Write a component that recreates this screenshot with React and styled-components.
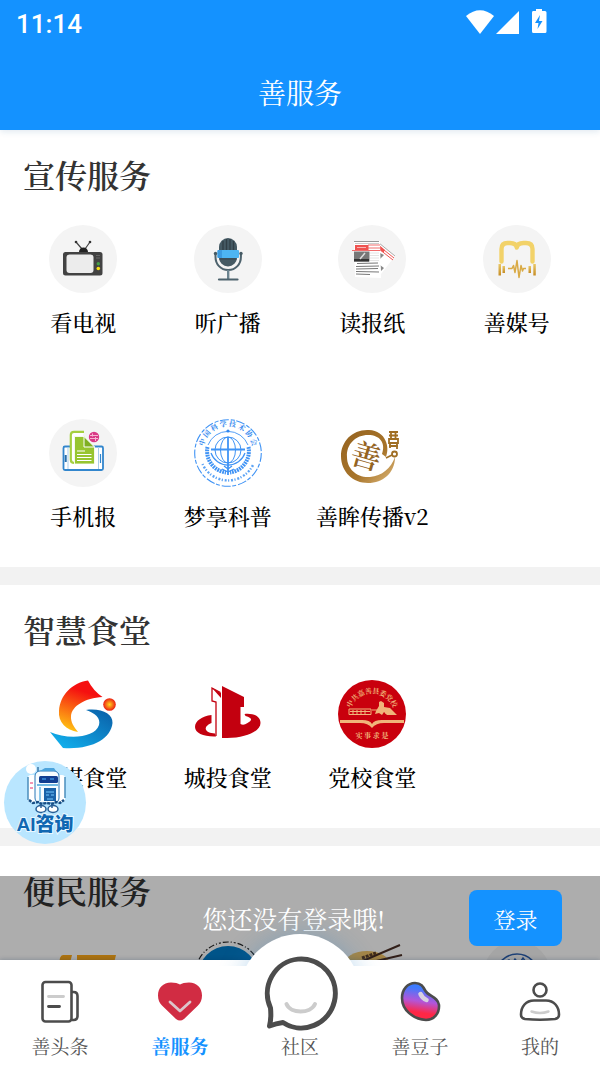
import React from "react";
import styled, { createGlobalStyle, css } from "styled-components";

const GlobalStyle = createGlobalStyle`
  * {
    box-sizing: border-box;
  }
  body {
    margin: 0;
    background: #fff;
    font-family: "Noto Serif CJK SC", "Liberation Serif", "Noto Sans CJK SC", serif;
  }
  button {
    font-family: inherit;
  }
`;

const Screen = styled.div`
  position: relative;
  display: flex;
  flex-direction: column;
  height: 100vh;
  overflow: hidden;
  background: #fff;
`;

const Header = styled.header`
  flex: none;
  background: #1492ff;
  color: #fff;
  box-shadow: 0 2px 6px rgba(20, 80, 140, 0.12);
`;

const StatusBar = styled.div`
  display: flex;
  align-items: center;
  justify-content: space-between;
  height: 48px;
  padding: 0 52px 0 16px;
  font: 500 26px Roboto, sans-serif;
`;

const StatusIcons = styled.div`
  display: flex;
  align-items: center;
  height: 44px;
  align-self: flex-start;
`;

const PageTitle = styled.h1`
  margin: 0;
  padding: 24px 0 18px;
  font-size: 28px;
  line-height: 40px;
  font-weight: 400;
  text-align: center;
`;

const Content = styled.main`
  flex: 1;
  min-height: 0;
  overflow-y: auto;
  scrollbar-width: none;
`;

const Section = styled.section`
  border-bottom: 18px solid #f2f2f2;
`;

const SectionTitle = styled.h2`
  margin: 0;
  padding: 20px 23px 24px;
  font-size: 32px;
  line-height: 48px;
  font-weight: 600;
  color: #333;
`;

const ServiceGrid = styled.div`
  display: grid;
  grid-template-columns: repeat(4, 1fr);
  row-gap: 46px;
  padding: 3px 11px 0;
`;

const ServiceButton = styled.button`
  display: flex;
  flex-direction: column;
  align-items: center;
  gap: 13px;
  height: 148px;
  padding: 0;
  border: 0;
  background: none;
  color: #000;
  font-size: 22px;
  line-height: 32px;
  font-weight: 500;
  white-space: nowrap;
`;

const ServiceIcon = styled.span`
  display: block;
  width: 68px;
  height: 68px;
  border-radius: 50%;
  background: ${({ $plate }) => ($plate ? "#f4f4f4" : "transparent")};

  svg {
    display: block;
    overflow: visible;
  }
`;

const Assistant = styled.button`
  position: absolute;
  left: 4px;
  bottom: 222px;
  width: 82px;
  height: 83px;
  padding: 0;
  border: 0;
  border-radius: 50%;
  background: #b9e6ff;

  svg {
    display: block;
  }
`;

const LoginBar = styled.div`
  position: absolute;
  left: 0;
  right: 0;
  bottom: 106px;
  display: flex;
  align-items: center;
  justify-content: flex-end;
  gap: 84px;
  height: 84px;
  padding-right: 38px;
  background: rgba(0, 0, 0, 0.32);
  color: #fff;
  font-size: 25px;
`;

const LoginButton = styled.button`
  width: 93px;
  height: 56px;
  border: 0;
  border-radius: 8px;
  background: #1492ff;
  color: #fff;
  font-size: 22px;
`;

const TabBar = styled.nav`
  position: absolute;
  left: 0;
  right: 0;
  bottom: 0;
  display: grid;
  grid-template-columns: repeat(5, 1fr);
  height: 106px;
  background: #fff;
  box-shadow: 0 -1px 4px rgba(0, 40, 80, 0.2);
`;

const Tab = styled.button`
  position: relative;
  z-index: 1;
  display: flex;
  flex-direction: column;
  align-items: center;
  gap: 8px;
  padding: 17px 0 0;
  border: 0;
  background: none;
  color: #555;
  font-size: 19px;
  line-height: 26px;
  font-weight: 400;

  ${({ $active }) =>
    $active &&
    css`
      color: #1492ff;
      font-weight: 700;
    `}
`;

const TabIcon = styled.span`
  display: flex;
  align-items: center;
  justify-content: center;
  width: 48px;
  height: 48px;

  ${({ $raised }) =>
    $raised &&
    css`
      height: 66px;
      margin-top: -18px;
    `}

  svg {
    flex: none;
    overflow: visible;
  }
`;

// round bump behind the middle tab
const Bump = styled.span`
  position: absolute;
  left: 50%;
  top: -26px;
  width: 122px;
  height: 122px;
  margin-left: -61px;
  border-radius: 50%;
  background: #fff;
  box-shadow: 0 0 24px rgba(40, 130, 200, 0.3);
`;

const BumpCover = styled.span`
  position: absolute;
  left: 0;
  right: 0;
  top: 6px;
  bottom: 0;
  background: #fff;
`;

const Art = ({ size = 68, children, ...rest }) => (
  <svg width={size} height={size} viewBox={`0 0 ${size} ${size}`} fill="none" aria-hidden="true" {...rest}>
    {children}
  </svg>
);

const TvIcon = () => (
  <Art>
    <path d="M33 24 27 17M36 24 41 17" stroke="#444" strokeWidth="1.2" />
    <circle cx="27" cy="17" r="1.3" fill="#333" />
    <circle cx="41" cy="17" r="1.3" fill="#333" />
    <path d="M30 27a4.5 4.5 0 0 1 9 0z" fill="#222" />
    <rect x="14" y="27" width="39.5" height="23.5" rx="2.5" fill="#424242" />
    <rect x="17.5" y="29.5" width="27" height="18.5" rx="3" fill="#ececec" />
    <path d="M47 30.5h4M47 33h4" stroke="#666" />
    <circle cx="49.3" cy="38.7" r="1.7" fill="#43a047" />
    <circle cx="49.3" cy="43.5" r="1.8" fill="#f6de16" />
  </Art>
);

const MicIcon = () => (
  <Art>
    <rect x="25" y="13" width="18" height="28.5" rx="9" fill="#455a64" />
    <path d="M29 16v9M32.5 14v11M36 14v11M39.5 16v9" stroke="#303e46" strokeWidth="1.3" />
    <path d="M25 34h18" stroke="#37474f" />
    <rect x="23.5" y="25" width="21.5" height="8" rx="1" fill="#4db5f2" />
    <path d="M23.5 26a1 1 0 0 1 1-1H28v8h-3.5a1 1 0 0 1-1-1z" fill="#3b9be0" />
    <path d="M21.5 28v4c0 7 5 13 12.7 13s12.7-6 12.7-13v-4" stroke="#4d626d" strokeWidth="2" />
    <circle cx="21.5" cy="28.5" r="1.7" fill="#455a64" />
    <circle cx="47" cy="28.5" r="1.7" fill="#455a64" />
    <path d="M34.2 45v9" stroke="#6c8490" strokeWidth="2.4" />
    <path d="M25 54.5h18.5" stroke="#4d626d" strokeWidth="2.2" strokeLinecap="round" />
  </Art>
);

const NewspaperIcon = () => (
  <Art>
    <path d="M38 16 57 31 43 49 36 44z" fill="#fff" />
    <path d="M41 18 57 31" stroke="#aaa" />
    <path d="M41 21 56 33M41 24 55 35" stroke="#ef5350" strokeWidth="1" />
    <path d="m41 20 6 5-1.5 2.5-4.5-3z" fill="#ef5350" />
    <path d="m42 28 4 2-4 4zM42 40l4 3-3 3z" fill="#888" />
    <path d="M16 16h26l1 37-26-1z" fill="#fff" />
    <path d="M16 16.5h25" stroke="#999" />
    <path d="M17 18.5h24" stroke="#ccc" />
    <path d="M14 25.5h28M30 20h12M30 23h12" stroke="#f15b5b" strokeWidth="0.9" />
    <rect x="17" y="20" width="13.5" height="5" fill="#ef5350" />
    <path d="M19 22.5h9" stroke="#f9b4b4" strokeWidth="1" />
    <rect x="16" y="26.5" width="15.5" height="10" fill="#777" />
    <path d="M16 34h15v2.5H16z" fill="#333" />
    <path d="m22 34 5-6" stroke="#ddd" strokeWidth="1.5" />
    <path d="M32 28h9M32 30.5h9M32 33h9M32 35.5h9" stroke="#ddd" strokeWidth="0.8" />
    <path d="M19 38.5 40 38M18 41.5l23-.5M18 44l22-.5M18 46.5l23 .5M18 49l14 .5" stroke="#777" strokeWidth="1" />
  </Art>
);

const MediaIcon = () => (
  <Art>
    <defs>
      <linearGradient id="gold" x1="0" y1="0" x2="0" y2="1">
        <stop offset="0" stopColor="#e9c765" />
        <stop offset="1" stopColor="#c68d26" />
      </linearGradient>
    </defs>
    <path d="M18.5 36.5V24q0-6 6-6H27q6 0 6.8 4.5Q34.500 18 40.500 18H43q6.500 0 6.500 6v12.500" stroke="#f2d269" strokeWidth="4.4" strokeLinecap="round" strokeLinejoin="round" />
    <g fill="url(#gold)">
      <rect x="15.5" y="39" width="2.5" height="11.5" />
      <rect x="19.5" y="41" width="2.5" height="7" />
      <rect x="45.5" y="41" width="2.5" height="7" />
      <rect x="50.3" y="39" width="2.5" height="11.5" />
    </g>
    <path d="M25 43.500h4l1.500-3 1.500 7 2-12 2 17 2-12 1.500 5.500 1-2.500H43" stroke="#d9aa45" strokeWidth="1.5" strokeLinejoin="round" />
  </Art>
);

const PhonePaperIcon = () => (
  <Art>
    <rect x="14.5" y="27.5" width="39.5" height="23.5" rx="1.5" fill="#fff" stroke="#3286cd" strokeWidth="1.8" />
    <path d="M19 28v22M49.5 28v22" stroke="#a9cdea" strokeWidth="1" />
    <path d="M16.7 36v7" stroke="#256eac" strokeWidth="2" />
    <path d="M51.5 35v9" stroke="#3286cd" strokeWidth="1.2" />
    <path d="M35 12.8H25q-3.200 0-3.200 3.200v24.500q0 3.500 3.500 3.500" stroke="#a5cf3f" strokeWidth="2.2" fill="#fff" />
    <path d="M25.500 17.500H35L45.500 28v17h-20z" fill="#97c52f" stroke="#fff" strokeWidth="0.8" />
    <path d="M35 17.500V28h10.500z" fill="#7faf22" stroke="#fff" strokeWidth="1" />
    <path d="M28 32h8M28 35.500h14.500M28 38.500h14.500M28 41.500h14.500" stroke="#fff" strokeWidth="1.2" />
    <circle cx="45" cy="18" r="5.2" fill="#d93a86" />
    <path d="M41 16.500h8M41 19.500h8M43.500 14.500v3M46.500 18v4" stroke="#f7b4d2" strokeWidth="1" />
  </Art>
);

const ScienceIcon = () => (
  <Art>
    <defs>
      <path id="science-top" d="M10.5 40A24.8 24.8 0 1 1 57.5 40" />
    </defs>
    <g stroke="#3f93f5">
      <circle cx="34" cy="34" r="33.3" strokeWidth="1.1" strokeDasharray="9 2 4 1.5" />
      <path d="M14 26A21.5 21.5 0 0 1 54 26" strokeWidth="0.9" />
      <path d="M13.5 28A21.5 21.5 0 0 0 32 53.500M54.500 28A21.5 21.5 0 0 1 36 53.500" strokeWidth="4" strokeDasharray="1.8 .8" />
      <path d="M17 34a18 18 0 0 0 34 0" strokeWidth="1.2" />
      <circle cx="34" cy="31" r="13" />
      <ellipse cx="34" cy="31" rx="7.5" ry="13" />
      <path d="M17 30.500h34" strokeWidth="2" />
      <path d="M34 18v38" strokeWidth="1.8" />
      <path d="M28 50l6 3 6-3M30 47l4 3 4-3" strokeWidth="1.3" />
    </g>
    <circle cx="34" cy="12" r="1.6" fill="#2f86ef" />
    <text fill="#2f86ef" fontSize="7" fontWeight="700">
      <textPath href="#science-top" startOffset="50%" textAnchor="middle">中 国 科 学 技 术 协 会</textPath>
    </text>
    <path d="M8.500 45A28 28 0 0 0 59.500 45" stroke="#5da4f5" strokeWidth="2.4" strokeDasharray="1.2 1.8 2 1.4" />
  </Art>
);

const BrushIcon = () => (
  <Art>
    <defs>
      <linearGradient id="brush" x1="0" y1="0" x2="1" y2="1">
        <stop offset="0" stopColor="#94621f" />
        <stop offset="0.6" stopColor="#a8752b" />
        <stop offset="1" stopColor="#dfba7d" />
      </linearGradient>
    </defs>
    <path
      d="M48 38C52 28 48 12 31 11 15 10 3 22 3 37 3 53 15 64 30 64c15 0 27-10 27-26-4 11-13 19-25 20C19 59 9 50 9 38 8 25 18 16 30 16c12 0 18 8 14 19z"
      fill="url(#brush)"
    />
    <text x="28" y="48" fontSize="30" fontWeight="600" fill="#94641f" textAnchor="middle" transform="rotate(16 28 38)">
      善
    </text>
    <g stroke="#a06f25" strokeWidth="1.8">
      <path d="M51 13h9M51 16.500h9M53 12v7M57.500 12v7M51 20h9v4h-9zM51 27h9M52 24v5M59 24v6" />
      <circle cx="56.5" cy="35" r="2.5" />
      <path d="m48 39 6-3" />
    </g>
  </Art>
);

const RongmeiIcon = () => (
  <Art>
    <defs>
      <linearGradient id="flame" x1="0.6" y1="0" x2="0.3" y2="1">
        <stop offset="0.2" stopColor="#f51010" />
        <stop offset="1" stopColor="#ffc414" />
      </linearGradient>
      <linearGradient id="wave" x1="1" y1="0" x2="0" y2="1">
        <stop offset="0" stopColor="#0a5da6" />
        <stop offset="1" stopColor="#12b8f4" />
      </linearGradient>
      <radialGradient id="sun">
        <stop offset="0" stopColor="#ffd51c" />
        <stop offset="1" stopColor="#ec1c12" />
      </radialGradient>
    </defs>
    <path d="M39 .5q5 10 14.500 16.500C36 18 23 26 22 36c-.5 6 3 11 7 16C17 50 9 42 10 31 11 15 23 3 39 .5z" fill="url(#flame)" />
    <path d="M37 30c16-2 27 4 26.500 13C62 59 42 70 14 68L1 52c18 8 45 6 49-7 2-7-4-12-13-15z" fill="url(#wave)" />
    <circle cx="60.5" cy="24.5" r="6.3" fill="url(#sun)" />
  </Art>
);

const ChengtouIcon = () => (
  <Art>
    <path d="M28 6 50 17v10h-3.500v17q3 2 7-1c5-3 5-5-2-7l-1-2c10-1 16 3 16 9 0 8-14 15-33.500 15h-5z" fill="#c3000f" />
    <path d="M17.500 35C8 36 1 41 1 47c0 6 9 10 21 9.500l-1-3C11 53 8 47 17.500 43z" fill="#c3000f" />
    <path d="M26.500 12.500 18 8v13l4 1v34" stroke="#c3000f" strokeWidth="1.3" />
    <path d="m18 8 9 10v-5z" fill="#c3000f" />
  </Art>
);

const SchoolIcon = () => (
  <Art>
    <defs>
      <path id="school-top" d="M5 36A29 29 0 0 1 63 36" />
    </defs>
    <circle cx="34" cy="34" r="34" fill="#c9000d" />
    <g fill="#f0b57a">
      <text fontSize="7" fontWeight="700">
        <textPath href="#school-top" startOffset="50%" textAnchor="middle" dominantBaseline="hanging">中 共 嘉 善 县 委 党 校</textPath>
      </text>
      <text x="34" y="58" fontSize="7" fontWeight="700" textAnchor="middle">实 事 求 是</text>
      <path d="M2 40h22q8 0 10 4 2-4 10-4h22v3H46q-8 0-12 5-4-5-12-5H2z" />
      <path d="m38 31 3-5v-4l2-1 3 2v4l6 1 4 4 3 3H49l-3-3-2 3-3-2-4 1z" />
    </g>
    <path d="M11 29h22v5.500H11zM12 31.500h20M15 34v-4M19 34v-4M23 34v-4M27 34v-4" stroke="#f0b57a" strokeWidth="1" />
    <path d="M34 30h5M48 31v3M53 31v3" stroke="#f0b57a" />
  </Art>
);

const OrangeIcon = () => (
  <Art>
    <path d="M14 14h9l-2 8H10l1-5q1-3 3-3zM28 14h39l-2 8H28z" fill="#ffaa18" />
  </Art>
);

const BlueSealIcon = () => (
  <Art>
    <circle cx="34" cy="34" r="33" stroke="#222" strokeWidth="1.2" strokeDasharray="6 2 1 2 2 2" />
    <circle cx="34" cy="35" r="30" fill="#007dca" />
  </Art>
);

const NoodleIcon = () => (
  <Art>
    <ellipse cx="29" cy="24" rx="23" ry="14" fill="#f3c566" />
    <path d="M62 4 20 22M64 14 34 21" stroke="#4a2f25" strokeWidth="2" />
    <path d="M24 17l14-5" stroke="#61422a" strokeWidth="3" strokeDasharray="3 1" />
  </Art>
);

const RingIcon = () => (
  <Art>
    <circle cx="34" cy="34" r="21" stroke="#2b5fae" strokeWidth="1.5" />
    <path d="m22 21 4-2 3 4 3-5 4 5 4-6 3 4 4 1" stroke="#2b5fae" strokeWidth="1.5" />
  </Art>
);

const RobotArt = () => (
  <svg width="82" height="83" viewBox="0 0 82 83" aria-hidden="true">
    <g fill="#fff">
      <circle cx="27" cy="8" r="5" />
      <rect x="24" y="14" width="9" height="27" rx="3" />
      <rect x="52" y="14" width="9" height="27" rx="3" />
    </g>
    <path d="M34 6v6" stroke="#5a92bd" strokeWidth="2" />
    <rect x="31" y="10" width="24" height="32" rx="5" fill="#f6fcff" stroke="#2876b7" />
    <path d="M36 10h16l-2-3h-9z" fill="#4ca3dc" />
    <rect x="35" y="15" width="19" height="7" rx="1.5" fill="#123e91" />
    <path d="M38 18h4M46 18h4" stroke="#4ab4ff" strokeWidth="1" />
    <path d="M33 24h21" stroke="#71b9e3" strokeWidth="2" />
    <rect x="40" y="27" width="12" height="13" fill="#1a62a8" />
    <path d="M42 31h8M42 34h3M47 34h3M43 38h6" stroke="#75c8ff" strokeWidth="1" />
    <path d="M36 26v14" stroke="#8cc7ea" strokeWidth="2" />
    <path d="M24 16v23M61 16v21" stroke="#4b8fbd" strokeWidth="1.5" />
    <path d="M25 39l4 3 5-1 3 2 6-1 5 1 4-2 4 1 4-3" stroke="#174d83" strokeWidth="2.5" fill="none" strokeDasharray="3 1" />
    <path d="M26 22h3M26 27h3" stroke="#ef719a" strokeWidth="1.5" />
    <g fill="#fff" stroke="#285f96" strokeWidth="1.5">
      <ellipse cx="37" cy="48" rx="5" ry="3.500" />
      <ellipse cx="49" cy="48" rx="5" ry="3.500" />
      <path d="M37 43v4M48 43v4" />
    </g>
    <text
      x="41"
      y="70"
      fontSize="19"
      fontWeight="900"
      fontFamily='"Liberation Sans", "Noto Sans CJK SC", sans-serif'
      textAnchor="middle"
      fill="#1067b2"
      stroke="#e9f8ff"
      strokeWidth="2"
      paintOrder="stroke"
    >
      AI咨询
    </text>
  </svg>
);

const NewsTabIcon = () => (
  <Art size={48}>
    <rect x="6.5" y="5" width="29" height="39.5" rx="3" stroke="#4c4c4c" strokeWidth="2.6" />
    <path d="M36 15h1.500q4 0 4 4v20q0 4-4 4H36" stroke="#4c4c4c" strokeWidth="2.6" />
    <path d="M12.500 19.500h15" stroke="#ccc" strokeWidth="2.8" strokeLinecap="round" />
    <path d="M12.500 29.500h11" stroke="#4c4c4c" strokeWidth="2.8" strokeLinecap="round" />
  </Art>
);

const HeartTabIcon = () => (
  <Art size={48}>
    <path
      d="M24 7.500Q27 5.500 33 5.500C41 5.500 46 11 46 18.500 46 23 44.500 26 42 28.500L28 42Q24 45 20 42L6 28.500C3.500 26 2 23 2 18.500 2 11 7 5.500 15 5.500Q21 5.500 24 7.500z"
      fill="#d12c43"
    />
    <path d="m14 25 10 9 10-9" stroke="#dcc5cb" strokeWidth="2.8" strokeLinecap="round" strokeLinejoin="round" />
  </Art>
);

const ChatTabIcon = () => (
  <Art size={84}>
    <path
      d="M12.500 58A34 34.500 0 1 1 25 72.500Q18 73.500 11.500 76 13.500 68 12.500 58z"
      stroke="#4c4c4c"
      strokeWidth="5"
      strokeLinejoin="round"
    />
    <path d="M28.500 54c4 10 24 10 28.500 0" stroke="#ccc" strokeWidth="4" strokeLinecap="round" />
  </Art>
);

const BeanTabIcon = () => (
  <Art size={48}>
    <defs>
      <linearGradient id="bean" x1="0.6" y1="0" x2="0.45" y2="1">
        <stop offset="0.15" stopColor="#3d7bff" />
        <stop offset="0.5" stopColor="#b355d8" />
        <stop offset="0.8" stopColor="#ff2746" />
      </linearGradient>
    </defs>
    <path
      d="M19 6c6 0 8 3.500 10.500 8 3 5.500 12.500 5.500 13.500 14 .500 8.500-5 15-13 15C17 42 6 33 6 21 6 12 12 6 19 6z"
      fill="url(#bean)"
      stroke="#4c4c4c"
      strokeWidth="2.6"
    />
    <path d="M24.500 17q2 4.500 6 6" stroke="#d8d0e0" strokeWidth="4.500" strokeLinecap="round" />
  </Art>
);

const MeTabIcon = () => (
  <Art size={48}>
    <circle cx="24" cy="13" r="6.500" stroke="#4c4c4c" strokeWidth="2.6" />
    <path d="M18 23.500h12c8 0 13 6 13 14 0 3-1 4-4 4.500q-15 1.500-30 0c-3-.5-4-1.500-4-4.500 0-8 5-14 13-14z" stroke="#4c4c4c" strokeWidth="2.6" />
    <path d="M15.500 34.500q8.500 3 17 0" stroke="#ccc" strokeWidth="2.4" strokeLinecap="round" />
  </Art>
);

const sections = [
  {
    title: "宣传服务",
    items: [
      { label: "看电视", icon: TvIcon, plate: true },
      { label: "听广播", icon: MicIcon, plate: true },
      { label: "读报纸", icon: NewspaperIcon, plate: true },
      { label: "善媒号", icon: MediaIcon, plate: true },
      { label: "手机报", icon: PhonePaperIcon, plate: true },
      { label: "梦享科普", icon: ScienceIcon },
      { label: "善眸传播v2", icon: BrushIcon },
    ],
  },
  {
    title: "智慧食堂",
    items: [
      { label: "融媒食堂", icon: RongmeiIcon },
      { label: "城投食堂", icon: ChengtouIcon },
      { label: "党校食堂", icon: SchoolIcon },
    ],
  },
  {
    title: "便民服务",
    items: [
      { icon: OrangeIcon },
      { icon: BlueSealIcon },
      { icon: NoodleIcon },
      { icon: RingIcon, plate: true },
    ],
  },
];

const tabs = [
  { label: "善头条", icon: NewsTabIcon },
  { label: "善服务", icon: HeartTabIcon, active: true },
  { label: "社区", icon: ChatTabIcon, raised: true },
  { label: "善豆子", icon: BeanTabIcon },
  { label: "我的", icon: MeTabIcon },
];

const Status = () => (
  <StatusBar>
    <span>11:14</span>
    <StatusIcons>
      <svg width="82" height="26" viewBox="0 0 82 26" fill="#fff" aria-hidden="true">
        <path d="M0 7Q14-4.500 28 7L14 25z" />
        <path d="M30 25 53 2v23z" />
        <path d="M67 2h3V0h6v2h3q1.500 0 1.500 1.500v19q0 1.500-1.500 1.500H67.500Q66 24 66 22.500v-19Q66 2 67 2z" />
        <path d="m74 6-5 8h3.500l-1 6 5-8H73z" fill="#1492ff" />
      </svg>
    </StatusIcons>
  </StatusBar>
);

const Service = ({ label, icon: Icon, plate }) => (
  <ServiceButton type="button">
    <ServiceIcon $plate={plate}>
      <Icon />
    </ServiceIcon>
    {label}
  </ServiceButton>
);

const App = () => (
  <Screen>
    <GlobalStyle />
    <Header>
      <Status />
      <PageTitle>善服务</PageTitle>
    </Header>
    <Content>
      {sections.map(({ title, items }) => (
        <Section key={title}>
          <SectionTitle>{title}</SectionTitle>
          <ServiceGrid>
            {items.map((item, i) => (
              <Service key={i} {...item} />
            ))}
          </ServiceGrid>
        </Section>
      ))}
    </Content>
    <Assistant type="button">
      <RobotArt />
    </Assistant>
    <LoginBar>
      <span>您还没有登录哦!</span>
      <LoginButton type="button">登录</LoginButton>
    </LoginBar>
    <TabBar>
      <Bump />
      <BumpCover />
      {tabs.map(({ label, icon: Icon, active, raised }) => (
        <Tab key={label} type="button" $active={active}>
          <TabIcon $raised={raised}>
            <Icon />
          </TabIcon>
          {label}
        </Tab>
      ))}
    </TabBar>
  </Screen>
);

export default App;
